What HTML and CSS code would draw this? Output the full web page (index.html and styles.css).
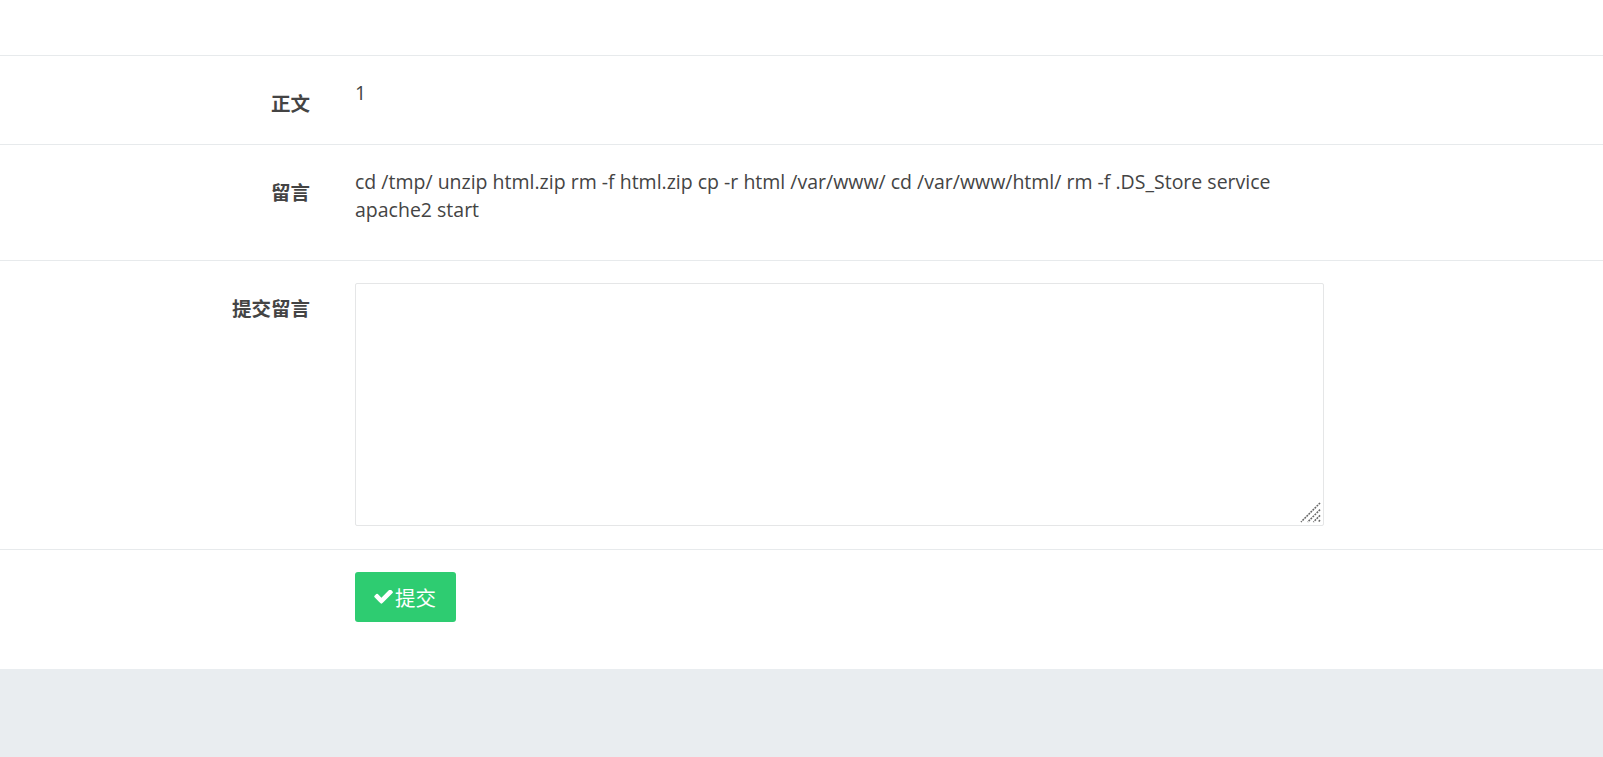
FILE: index.html
```html
<!DOCTYPE html>
<html>
  <head>
    <meta charset="utf-8">
    <meta name="viewport" content="width=device-width, initial-scale=1">
    <title>留言</title>
    <link rel="stylesheet" href="styles.css">
  </head>
  <body>
    <div class="panel">
      <form class="form">
        <div class="row">
          <label class="label">正文</label>
          <div class="value">1</div>
        </div>
        <div class="row">
          <label class="label">留言</label>
          <div class="value">cd /tmp/ unzip html.zip rm -f html.zip cp -r html /var/www/ cd /var/www/html/ rm -f .DS_Store service apache2 start</div>
        </div>
        <div class="row">
          <label class="label" for="reply">提交留言</label>
          <div class="field">
            <textarea id="reply" class="input"></textarea>
            <svg class="grip" viewBox="0 0 22 22"><path d="M21 1 1 21M21 8 8 21M21 14 14 21M21 19 19 21"/></svg>
          </div>
        </div>
        <div class="row">
          <span></span>
          <div>
            <button type="button" class="btn">
              <svg class="icon" viewBox="100 390 1580 1150"><path d="M1671 566q0 40-28 68l-724 724-136 136q-28 28-68 28t-68-28l-136-136-362-362q-28-28-28-68t28-68l136-136q28-28 68-28t68 28l294 295 656-657q28-28 68-28t68 28l136 136q28 28 28 68z"/></svg>提交
            </button>
          </div>
        </div>
      </form>
    </div>
  </body>
</html>
```

FILE: styles.css
```css
html, body { margin: 0; padding: 0; }
body { background: #e9edf0; color: #444; font-family: "Open Sans", "Noto Sans CJK SC", sans-serif; font-size: 19.5px; }
.panel { background: #fff; padding: 55px 0 24px; }
.row { display: grid; grid-template-columns: 310px 969px; column-gap: 45px; align-items: start; border-top: 1px solid #e7eaec; padding: 22px 0 23px; }
.label { font-family: "Noto Sans CJK SC", sans-serif; font-size: 19.5px; font-weight: bold; line-height: 30px; padding: 10px 0 3px; text-align: right; color: #444; }
.value { line-height: 28px; margin: 1px 0 13px; }
.field { position: relative; }
.input { display: block; box-sizing: border-box; width: 969px; height: 243px; margin: 0; padding: 6px 12px; border: 1px solid #e5e6e7; border-radius: 2px; font: inherit; color: inherit; resize: none; }
.grip { position: absolute; right: 3px; bottom: 3px; width: 21px; height: 21px; fill: none; stroke: #666; stroke-width: 1.6; stroke-dasharray: 2 1; }
.btn { display: inline-flex; align-items: center; box-sizing: border-box; width: 101px; height: 50px; padding: 0 19px; background: #2ecc71; color: #fff; border: none; border-radius: 3px; font-family: "Noto Sans CJK SC", sans-serif; font-size: 20.5px; cursor: pointer; }
.btn:hover { background: #29b765; }
.icon { width: 19px; height: 14px; margin-right: 2px; fill: #fff; }
```
